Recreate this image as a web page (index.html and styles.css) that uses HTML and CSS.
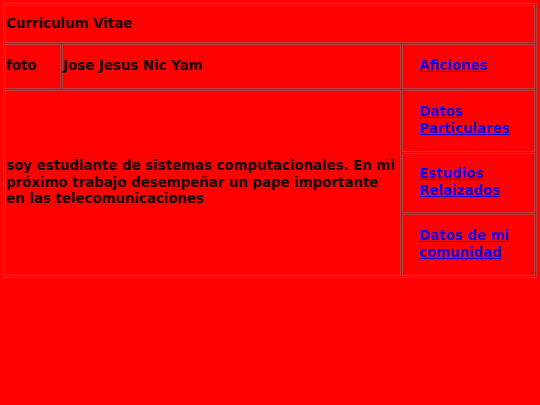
FILE: index.html
```html
<!DOCTYPE html>
<html>
<head>
<meta charset="utf-8">
<link rel="stylesheet" href="styles.css">
</head>
<body>
<table class="cv">
  <tr class="r-title">
    <td colspan="3">Curriculum Vitae</td>
  </tr>
  <tr class="r-name">
    <td class="c-foto">foto</td>
    <td class="c-name">Jose Jesus Nic Yam</td>
    <td class="c-link"><a href="#">Aficiones</a></td>
  </tr>
  <tr class="r-sub r-a">
    <td colspan="2" rowspan="3" class="c-about">soy estudiante de sistemas computacionales. En mi próximo trabajo desempeñar un pape importante en las telecomunicaciones</td>
    <td class="c-link"><a href="#">Datos Particulares</a></td>
  </tr>
  <tr class="r-sub r-b">
    <td class="c-link"><a href="#">Estudios Relaizados</a></td>
  </tr>
  <tr class="r-sub r-c">
    <td class="c-link"><a href="#">Datos de mi comunidad</a></td>
  </tr>
</table>
</body>
</html>
```
FILE: styles.css
```css
html, body {
  background: #ff0000;
}
body {
  margin: 3px;
  font-family: "DejaVu Sans", sans-serif;
  font-weight: bold;
  font-size: 13.33px;
  line-height: 16.7px;
  color: #100000;
}
.cv {
  width: 534px;
  border: 1px solid #b83c3c;
  border-spacing: 1px;
}
.cv td {
  border: 1px solid #b83c3c;
  padding: 1px 1px 1px 0;
  vertical-align: middle;
}
.r-title td {
  height: 34px;
}
.r-name td {
  height: 41px;
}
.r-a td.c-link {
  height: 58px;
}
.r-b td.c-link {
  height: 56px;
}
.r-c td.c-link {
  height: 58px;
}
.c-foto {
  width: 53px;
}
.c-link {
  width: 114px;
  padding-left: 16px !important;
}
.c-link a {
  color: #1000e0;
  text-decoration: underline;
}
```
